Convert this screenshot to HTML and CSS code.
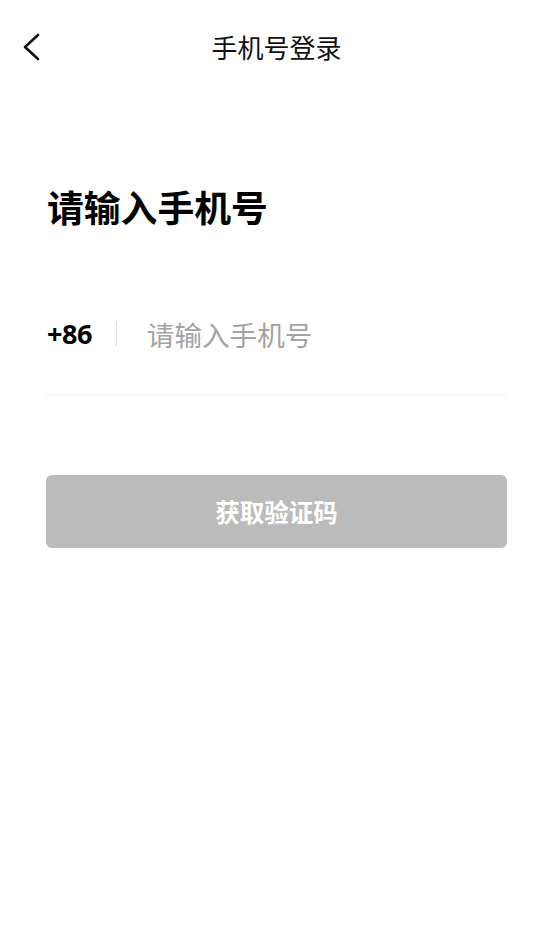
FILE: index.html
```html
<!DOCTYPE html>
<html lang="zh">
<head>
<meta charset="utf-8">
<link rel="stylesheet" href="styles.css">
</head>
<body>
<div class="page">
  <header class="nav">
    <span class="back">
      <svg width="20" height="30" viewBox="0 0 20 30"><polyline points="16,3 3,15 16,27" fill="none" stroke="#111" stroke-width="2.6" stroke-linecap="round" stroke-linejoin="round"/></svg>
    </span>
    <div class="title">手机号登录</div>
  </header>
  <main class="content">
    <h1 class="heading">请输入手机号</h1>
    <div class="phone-row">
      <span class="code">+86</span>
      <span class="sep"></span>
      <span class="placeholder">请输入手机号</span>
    </div>
    <button class="btn">获取验证码</button>
  </main>
</div>
</body>
</html>
```
FILE: styles.css
```css
* { box-sizing: border-box; }
html, body { margin: 0; padding: 0; background: #fff; }
body { font-family: "Noto Sans CJK SC", "Noto Sans", sans-serif; color: #111; }
.page { width: 553px; min-height: 951px; }
.nav { position: relative; height: 94px; display: flex; align-items: center; justify-content: center; }
.back { position: absolute; left: 22px; top: 32px; width: 20px; height: 30px; display: flex; }
.title { font-size: 26px; color: #111; line-height: 1; }
.content { padding: 0 46px; }
.heading { margin: 88px 0 0 1px; font-size: 36.8px; font-weight: 700; line-height: 48px; color: #000; }
.phone-row { margin-top: 70px; height: 96px; display: flex; align-items: center; border-bottom: 1px solid #eeeeee; padding-bottom: 28px; }
.code { font-family: "Open Sans", "Noto Sans", sans-serif; font-weight: 700; font-size: 27px; color: #000; margin-left: 1px; letter-spacing: -0.5px; }
.sep { width: 1px; height: 26px; background: #dcdcdc; margin: 0 30px 0 24px; }
.placeholder { font-size: 27.6px; color: #a3a3a3; }
.btn { display: block; margin-top: 79px; width: 461px; height: 73px; border: none; border-radius: 6px; background: #bbbbbb; color: #fff; font-family: "Noto Sans CJK SC", sans-serif; font-size: 24.5px; font-weight: 700; }
```
